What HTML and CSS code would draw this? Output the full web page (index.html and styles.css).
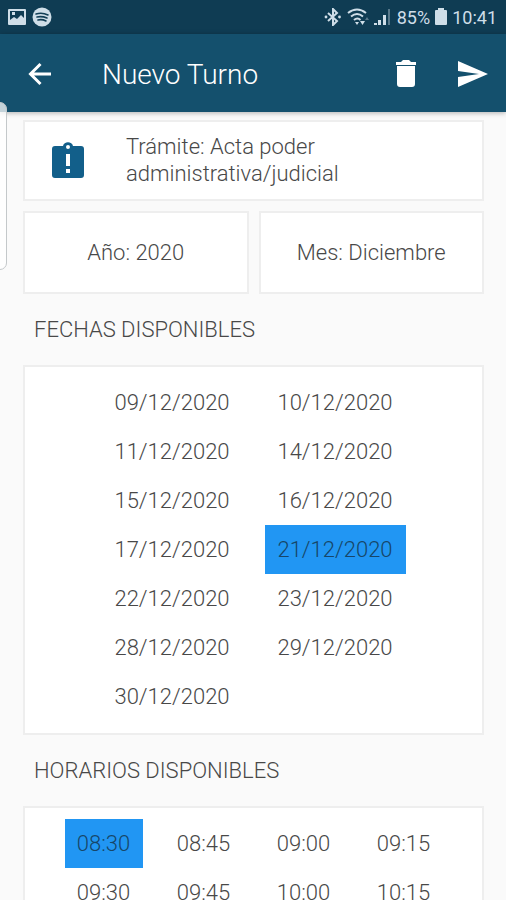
FILE: index.html
```html
<!DOCTYPE html>
<html lang="es">
<head>
  <meta charset="utf-8">
  <meta name="viewport" content="width=device-width, initial-scale=1">
  <title>Nuevo Turno</title>
  <link rel="stylesheet" href="styles.css">
</head>
<body>
  <div class="app">
    <div class="status">
      <div class="status-group">
        <svg width="18" height="18" viewBox="0 0 18 18" aria-hidden="true"><path fill="#cfdee8" fill-rule="evenodd" d="M1 1h16q1 0 1 1v14q0 1-1 1H1q-1 0-1-1V2q0-1 1-1zm1 2v9l4-3 3 2 4-4 3 3V3zm2 1h3v3H4z"/></svg>
        <svg width="20" height="20" viewBox="0 0 20 20" aria-hidden="true"><circle cx="10" cy="10" r="9.500" fill="#cfdee8"/><path d="M4 7q6-2 12 1M5 10q5-1 10 1M6 13q4-1 8 1" fill="none" stroke="#123f56" stroke-width="1.600" stroke-linecap="round"/></svg>
      </div>
      <div class="status-group status-right">
        <svg width="18" height="18" viewBox="0 0 18 18" aria-hidden="true"><path d="M4 5l9 8-4 4V1l4 4-9 8" fill="none" stroke="#cfdee8" stroke-width="2"/><circle cx="2" cy="9" r="1.400" fill="#cfdee8"/><circle cx="15.500" cy="9" r="1.400" fill="#cfdee8"/></svg>
        <svg width="22" height="18" viewBox="0 0 22 18" aria-hidden="true"><path d="M1 5q9-7 18 0M4 8.500q6-5 12 0M7 12q3.500-3 6.500 0" fill="none" stroke="#cfdee8" stroke-width="2"/><path d="M8 14h4l-2 3zM13 13h5l-2.500 4z" fill="#cfdee8"/><path d="M18 12l2-3 2 3z" fill="#58798b"/></svg>
        <svg width="18" height="18" viewBox="0 0 18 18" aria-hidden="true"><path d="M0 15h3v2H0zM4 12h3v5H4zM9 7h3v10H9z" fill="#cfdee8"/><path d="M14 1h2v16h-2z" fill="#58798b"/></svg>
        <span>85%</span>
        <svg width="12" height="18" viewBox="0 0 12 18" aria-hidden="true"><path d="M3 0h6v2h2q1 0 1 1v13q0 1-1 1H1q-1 0-1-1V3q0-1 1-1h2z" fill="#cfdee8"/></svg>
        <span>10:41</span>
      </div>
    </div>

    <header class="bar">
      <button class="icon-btn" aria-label="Volver"><svg width="24" height="24" viewBox="0 0 24 24"><path d="M23 12H3M12.500 2L2.500 12l10 10" fill="none" stroke="#fff" stroke-width="3"/></svg></button>
      <h1 class="title">Nuevo Turno</h1>
      <button class="icon-btn" aria-label="Eliminar"><svg width="20" height="28" viewBox="0 0 20 28"><path d="M0 2h5l2-2h6l2 2h5v3H0zM1 6h18v18q0 3-3 3H4q-3 0-3-3z" fill="#fff"/></svg></button>
      <button class="icon-btn" aria-label="Enviar"><svg width="30" height="26" viewBox="0 0 30 26"><path d="M0 0l30 13L0 26V16l21-3L0 10z" fill="#fff"/></svg></button>
    </header>

    <main class="content">
      <section class="card procedure">
        <svg width="34" height="36" viewBox="0 0 34 36" aria-hidden="true"><path fill="#125f8a" fill-rule="evenodd" d="M4 4h8c1-5 9-5 10 0h8q3 0 3 3v26q0 3-3 3H4q-3 0-3-3V7q0-3 3-3zm13-1a2 2 0 1 0 0 4 2 2 0 0 0 0-4zm-2 9v12h4V12zm0 15v4h4v-4z"/></svg>
        <p class="procedure-text">Trámite: Acta poder administrativa/judicial</p>
      </section>

      <div class="pickers">
        <button class="card picker">Año: 2020</button>
        <button class="card picker">Mes: Diciembre</button>
      </div>

      <h2 class="heading">FECHAS DISPONIBLES</h2>
      <div class="card options dates">
        <button class="option">09/12/2020</button>
        <button class="option">10/12/2020</button>
        <button class="option">11/12/2020</button>
        <button class="option">14/12/2020</button>
        <button class="option">15/12/2020</button>
        <button class="option">16/12/2020</button>
        <button class="option">17/12/2020</button>
        <button class="option selected" aria-pressed="true">21/12/2020</button>
        <button class="option">22/12/2020</button>
        <button class="option">23/12/2020</button>
        <button class="option">28/12/2020</button>
        <button class="option">29/12/2020</button>
        <button class="option">30/12/2020</button>
      </div>

      <h2 class="heading">HORARIOS DISPONIBLES</h2>
      <div class="card options times">
        <button class="option selected" aria-pressed="true">08:30</button>
        <button class="option">08:45</button>
        <button class="option">09:00</button>
        <button class="option">09:15</button>
        <button class="option">09:30</button>
        <button class="option">09:45</button>
        <button class="option">10:00</button>
        <button class="option">10:15</button>
      </div>
    </main>
    <div class="edge-handle"></div>
  </div>
</body>
</html>
```
FILE: styles.css
```css
* {
  box-sizing: border-box;
}

body {
  margin: 0;
  background: #fafafa;
  color: #484848;
  font-family: Roboto, "Liberation Sans", sans-serif;
  font-size: 22px;
  font-weight: 300;
  line-height: 27px;
}

button {
  margin: 0;
  padding: 0;
  border: 0;
  background: none;
  color: inherit;
  font: inherit;
  cursor: pointer;
}

svg {
  display: block;
  flex: none;
}

.app {
  position: relative;
  display: flex;
  flex-direction: column;
  height: 100vh;
  overflow: hidden;
}

.status {
  flex: none;
  display: flex;
  justify-content: space-between;
  align-items: center;
  height: 34px;
  padding: 0 9px 0 8px;
  background: #0f3c53;
  color: #cfdee8;
  font-size: 18px;
  font-weight: 400;
}

.status-group {
  display: flex;
  align-items: center;
  gap: 6px;
}

.status-right {
  gap: 5px;
}

.bar {
  z-index: 1;
  flex: none;
  display: flex;
  align-items: center;
  gap: 40px;
  height: 78px;
  padding: 2px 18px 0 28px;
  background: #14506d;
  color: #fff;
  box-shadow: 0 1px 5px rgba(0, 0, 0, 0.3);
}

.icon-btn {
  display: flex;
  align-items: center;
  justify-content: center;
  min-width: 24px;
  height: 48px;
}

.title {
  flex: 1;
  margin: 0 0 0 10px;
  padding-top: 2px;
  font-size: 28px;
  font-weight: 300;
  line-height: 36px;
}

.content {
  flex: 1;
  min-height: 0;
  overflow: hidden;
  padding: 8px 22px 0 23px;
}

.card {
  border: 2px solid #eee;
  background: #fff;
}

.procedure {
  display: flex;
  align-items: center;
  gap: 41px;
  min-height: 81px;
  padding: 0 100px 2px 26px;
}

.procedure-text {
  margin: 0;
}

.pickers {
  display: grid;
  grid-template-columns: 1fr 1fr;
  gap: 10px;
  margin-top: 10px;
}

.picker {
  min-height: 83px;
}

.heading {
  margin: 0;
  padding: 22px 11px;
  font-size: 22px;
  font-weight: 300;
  line-height: 27px;
}

.options {
  display: grid;
  justify-content: center;
  grid-auto-rows: 49px;
  column-gap: 22px;
  padding: 11px 0 12px;
}

.dates {
  grid-template-columns: repeat(2, 141px);
}

.times {
  grid-template-columns: repeat(4, 78px);
}

.selected {
  background: #2196f3;
  color: #174668;
}

.edge-handle {
  position: absolute;
  top: 102px;
  left: -8px;
  width: 15px;
  height: 168px;
  border: 1px solid #c4c8ca;
  border-radius: 7px;
  background: rgba(255, 255, 255, 0.75);
  z-index: 2;
}
```
